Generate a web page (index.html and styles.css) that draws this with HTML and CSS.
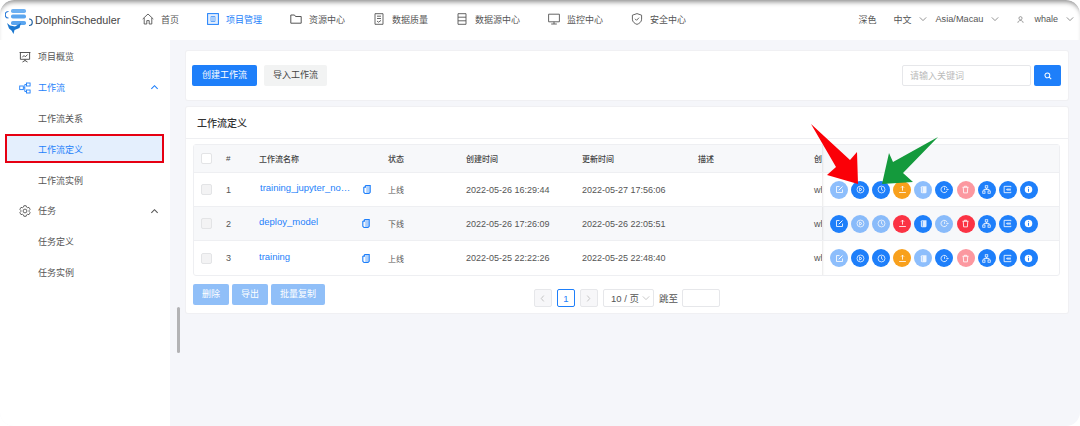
FILE: index.html
```html
<!DOCTYPE html>
<html lang="zh-CN">
<head>
<meta charset="utf-8">
<title>DolphinScheduler</title>
<link rel="stylesheet" href="styles.css">
</head>
<body>
<svg class="defs" aria-hidden="true">
  <symbol id="i-chev-d" viewBox="0 0 10 10"><path d="M1 3l4 4 4-4" fill="none" stroke="currentColor" stroke-width="1"/></symbol>
  <symbol id="i-chev-u" viewBox="0 0 10 10"><path d="M1.5 6.5L5 3l3.5 3.5" fill="none" stroke="currentColor" stroke-width="1.2"/></symbol>
  <symbol id="i-copy" viewBox="0 0 10 12"><path d="M3 1h6v8.5L7.5 11H2.5L1 9.5V3M3 1v2H1" fill="none" stroke="currentColor" stroke-width="1.4"/><path d="M3 1.5h5.5v8L7 10.5H4V2z" fill="currentColor" opacity=".35"/></symbol>
  <symbol id="a-edit" viewBox="0 0 12 12"><path d="M6 2H2v8h8V6" fill="none" stroke="#fff" stroke-width="1.1"/><path d="M5 7l5-5" stroke="#fff" stroke-width="1.3"/></symbol>
  <symbol id="a-play" viewBox="0 0 12 12"><circle cx="6" cy="6" r="4.6" fill="none" stroke="#fff"/><path d="M4.8 3.8L8 6 4.8 8.2z" fill="none" stroke="#fff"/></symbol>
  <symbol id="a-clock" viewBox="0 0 12 12"><circle cx="6" cy="6" r="4.6" fill="none" stroke="#fff"/><path d="M6 3v3.2l2 1.2" fill="none" stroke="#fff"/></symbol>
  <symbol id="a-upload" viewBox="0 0 12 12"><path d="M6 1.5v6M4 3.5l2-2 2 2M1.5 10h9" fill="none" stroke="#fff" stroke-width="1.1"/></symbol>
  <symbol id="a-file" viewBox="0 0 12 12"><path d="M3.5 1.5H10v8.5L8.7 11H4L2.5 10V3z" fill="#fff" opacity=".85"/><path d="M4.5 2.5L4.5 10" stroke="currentColor" stroke-width=".8"/></symbol>
  <symbol id="a-version" viewBox="0 0 12 12"><path d="M9.5 7.5A4.2 4.2 0 1 1 9.5 4.5" fill="none" stroke="#fff" stroke-width="1.1"/><path d="M6 3.5v3M8.5 6h3" stroke="#fff"/></symbol>
  <symbol id="a-trash" viewBox="0 0 12 12"><path d="M2 3h8M4.5 3V1.7h3V3M3 3l.5 7.5h5L9 3" fill="none" stroke="#fff" stroke-width="1.1"/></symbol>
  <symbol id="a-tree" viewBox="0 0 12 12"><g fill="none" stroke="#fff"><rect x="4.3" y="1" width="3.4" height="3"/><rect x="1" y="8" width="3" height="3"/><rect x="8" y="8" width="3" height="3"/><path d="M6 4v2M2.5 8V6h7v2"/></g></symbol>
  <symbol id="a-export" viewBox="0 0 12 12"><path d="M10.5 3V1.8h-9v8.4h9V9M10.5 5.5H5v1.2h5.5" fill="none" stroke="#fff" stroke-width="1.1"/></symbol>
  <symbol id="a-info" viewBox="0 0 12 12"><circle cx="6" cy="6" r="5" fill="#fff"/><path d="M6 3v1.2M6 5.2V9" stroke="currentColor" stroke-width="1.3"/></symbol>
</svg>

<div class="window">
  <header class="topbar">
    <a class="logo">
      <svg class="logo-mark" viewBox="0 0 28 28" width="28" height="28">
        <rect x="6" y="1" width="15" height="4" rx="1.8" fill="#6cb0f2"/>
        <rect x="6" y="6.5" width="15" height="4" rx="1.8" fill="#5aa5ef"/>
        <rect x="6" y="13" width="15" height="4" rx="1.8" fill="#5aa5ef"/>
        <path d="M3.5 3.5A3 3 0 0 0 3.5 10" fill="none" stroke="#2a7ad8" stroke-width="1.2"/>
        <path d="M24 11A3 3 0 0 1 24 17.5" fill="none" stroke="#1f5f9f" stroke-width="1.2"/>
        <path d="M2 15l3 2.5 5 1 6-3.5-1.500 5-5 2-1 4-2-3.500-2.500-2z" fill="#1c78d0"/>
      </svg>
      <span class="logo-text">DolphinScheduler</span>
    </a>
    <nav class="nav">
      <a class="nav-item"><svg class="nav-icon" viewBox="0 0 12 12"><path d="M.7 6L6 1l5.3 5M2.2 5v6h2.6V7.6h2.4V11h2.6V5" fill="none" stroke="currentColor" stroke-width=".9"/></svg>首页</a>
      <a class="nav-item is-active"><svg class="nav-icon" viewBox="0 0 12 12"><rect x=".6" y=".6" width="10.8" height="10.8" fill="#e3eefd" stroke="currentColor"/><path d="M4 3.5h4v5H4zM6 3.5v5" fill="none" stroke="currentColor" stroke-width=".6"/></svg>项目管理</a>
      <a class="nav-item"><svg class="nav-icon" viewBox="0 0 12 12"><path d="M.8 2h3.7l1 1.5h5.700v6.700H.8z" fill="none" stroke="currentColor"/></svg>资源中心</a>
      <a class="nav-item"><svg class="nav-icon" viewBox="0 0 12 12"><path d="M2 .7h8v10.600H2zM4 3.200h4M4 5.500h4M4 8l1.500 1.200L8 7.400" fill="none" stroke="currentColor" stroke-width=".9"/></svg>数据质量</a>
      <a class="nav-item"><svg class="nav-icon" viewBox="0 0 12 12"><path d="M2 .7h8v10.600H2zM2 4.200h8M2 7.800h8" fill="none" stroke="currentColor" stroke-width=".9"/></svg>数据源中心</a>
      <a class="nav-item"><svg class="nav-icon" viewBox="0 0 12 12"><path d="M.6 1.200h10.800v7.600H.6zM6 8.800v2.200M3.200 11h5.600" fill="none" stroke="currentColor" stroke-width=".9"/></svg>监控中心</a>
      <a class="nav-item"><svg class="nav-icon" viewBox="0 0 12 12"><path d="M6 .6l4.600 1.600v4C10.600 9 8.300 10.500 6 11.400 3.700 10.500 1.400 9 1.400 6.200v-4zM4 5.800l1.500 1.500L8 4.700" fill="none" stroke="currentColor" stroke-width=".9"/></svg>安全中心</a>
    </nav>
    <div class="top-tools">
      <span class="tool tool-theme">深色</span>
      <span class="tool">中文<svg class="chev"><use href="#i-chev-d"/></svg></span>
      <span class="tool tool-zone">Asia/Macau<svg class="chev"><use href="#i-chev-d"/></svg></span>
      <span class="tool"><svg class="user" viewBox="0 0 8 8"><circle cx="4" cy="2.500" r="1.800" fill="none" stroke="currentColor" stroke-width=".7"/><path d="M1 7.800c0-3.500 6-3.500 6 0" fill="none" stroke="currentColor" stroke-width=".7"/></svg>whale<svg class="chev"><use href="#i-chev-d"/></svg></span>
    </div>
  </header>

  <div class="body">
    <aside class="side">
      <a class="side-item"><svg class="side-icon" viewBox="0 0 12 12"><path d="M.6 1.500h10.800M1.400 1.500v6.800h9.200V1.500M6 8.300v1.200M3.500 11L6 9.500 8.500 11M3.300 6.300L5 4.500l1.300 1.300 2.300-2.300" fill="none" stroke="#444" stroke-width=".9"/></svg>项目概览</a>
      <a class="side-item is-open"><svg class="side-icon" viewBox="0 0 12 12"><g fill="none" stroke="currentColor" stroke-width=".9"><rect x=".7" y="4" width="3.600" height="3.600"/><rect x="7.500" y="1" width="3.600" height="3"/><rect x="7.500" y="8" width="3.600" height="3"/><path d="M4.300 5.800h1.500M5.800 2.500v7M5.800 2.500h1.700M5.800 9.500h1.700"/></g></svg>工作流<svg class="side-chev"><use href="#i-chev-u"/></svg></a>
      <a class="side-item side-sub">工作流关系</a>
      <a class="side-item side-sub is-current"><span class="current-bg"></span><span class="current-label">工作流定义</span></a>
      <a class="side-item side-sub">工作流实例</a>
      <a class="side-item"><svg class="side-icon" viewBox="0 0 12 12"><path d="M4.880 .72L7.120 .72 7.570 2.110 8.590 2.690 10.010 2.390 11.140 4.330 10.160 5.420 10.160 6.580 11.140 7.670 10.010 9.610 8.590 9.310 7.570 9.890 7.120 11.280 4.880 11.280 4.430 9.890 3.410 9.310 1.990 9.610 .86 7.670 1.840 6.580 1.840 5.420 .86 4.330 1.990 2.390 3.410 2.690 4.430 2.110z" fill="none" stroke="#444" stroke-width=".8"/><circle cx="6" cy="6" r="1.900" fill="none" stroke="#444" stroke-width=".8"/></svg>任务<svg class="side-chev"><use href="#i-chev-u"/></svg></a>
      <a class="side-item side-sub">任务定义</a>
      <a class="side-item side-sub">任务实例</a>
    </aside>

    <main class="main">
      <section class="card toolbar">
        <button class="btn btn-primary">创建工作流</button>
        <button class="btn btn-default">导入工作流</button>
        <div class="search">
          <input class="search-input" placeholder="请输入关键词">
          <button class="btn btn-primary btn-search"><svg viewBox="0 0 10 10" width="8" height="8"><circle cx="4.200" cy="4.200" r="3" fill="none" stroke="#fff" stroke-width="1.300"/><path d="M6.500 6.500L9 9" stroke="#fff" stroke-width="1.300"/></svg></button>
        </div>
      </section>

      <section class="card list">
        <h2 class="list-title">工作流定义</h2>
        <div class="list-body">
          <table class="table">
            <colgroup>
              <col class="c-check"><col class="c-num"><col class="c-name"><col class="c-state"><col class="c-time"><col class="c-time"><col class="c-time"><col class="c-user"><col>
            </colgroup>
            <thead>
              <tr>
                <th><span class="check check-head"></span></th><th>#</th><th>工作流名称</th><th>状态</th><th>创建时间</th><th>更新时间</th><th>描述</th><th>创建用户</th><th class="fixed"></th>
              </tr>
            </thead>
            <tbody>
              <tr>
                <td><span class="check"></span></td><td>1</td>
                <td><div class="name"><a class="link link-long">training_jupyter_notebook</a><svg class="copy"><use href="#i-copy"/></svg></div></td>
                <td class="state">上线</td><td>2022-05-26 16:29:44</td><td>2022-05-27 17:56:06</td><td></td><td>whale</td>
                <td class="fixed"><div class="acts">
                  <span class="act off"><svg><use href="#a-edit"/></svg></span>
                  <span class="act"><svg><use href="#a-play"/></svg></span>
                  <span class="act"><svg><use href="#a-clock"/></svg></span>
                  <span class="act warn"><svg><use href="#a-upload"/></svg></span>
                  <span class="act off"><svg><use href="#a-file"/></svg></span>
                  <span class="act"><svg><use href="#a-version"/></svg></span>
                  <span class="act danger off"><svg><use href="#a-trash"/></svg></span>
                  <span class="act"><svg><use href="#a-tree"/></svg></span>
                  <span class="act"><svg><use href="#a-export"/></svg></span>
                  <span class="act"><svg><use href="#a-info"/></svg></span>
                </div></td>
              </tr>
              <tr class="stripe">
                <td><span class="check"></span></td><td>2</td>
                <td><div class="name"><a class="link">deploy_model</a><svg class="copy"><use href="#i-copy"/></svg></div></td>
                <td class="state">下线</td><td>2022-05-26 17:26:09</td><td>2022-05-26 22:05:51</td><td></td><td>whale</td>
                <td class="fixed"><div class="acts">
                  <span class="act"><svg><use href="#a-edit"/></svg></span>
                  <span class="act off"><svg><use href="#a-play"/></svg></span>
                  <span class="act off"><svg><use href="#a-clock"/></svg></span>
                  <span class="act danger"><svg><use href="#a-upload"/></svg></span>
                  <span class="act"><svg><use href="#a-file"/></svg></span>
                  <span class="act off"><svg><use href="#a-version"/></svg></span>
                  <span class="act danger"><svg><use href="#a-trash"/></svg></span>
                  <span class="act"><svg><use href="#a-tree"/></svg></span>
                  <span class="act"><svg><use href="#a-export"/></svg></span>
                  <span class="act"><svg><use href="#a-info"/></svg></span>
                </div></td>
              </tr>
              <tr>
                <td><span class="check"></span></td><td>3</td>
                <td><div class="name"><a class="link">training</a><svg class="copy"><use href="#i-copy"/></svg></div></td>
                <td class="state">上线</td><td>2022-05-25 22:22:26</td><td>2022-05-25 22:48:40</td><td></td><td>whale</td>
                <td class="fixed"><div class="acts">
                  <span class="act off"><svg><use href="#a-edit"/></svg></span>
                  <span class="act"><svg><use href="#a-play"/></svg></span>
                  <span class="act"><svg><use href="#a-clock"/></svg></span>
                  <span class="act warn"><svg><use href="#a-upload"/></svg></span>
                  <span class="act off"><svg><use href="#a-file"/></svg></span>
                  <span class="act"><svg><use href="#a-version"/></svg></span>
                  <span class="act danger off"><svg><use href="#a-trash"/></svg></span>
                  <span class="act"><svg><use href="#a-tree"/></svg></span>
                  <span class="act"><svg><use href="#a-export"/></svg></span>
                  <span class="act"><svg><use href="#a-info"/></svg></span>
                </div></td>
              </tr>
            </tbody>
          </table>
          <div class="foot">
            <div class="batch">
              <button class="btn btn-batch">删除</button>
              <button class="btn btn-batch">导出</button>
              <button class="btn btn-batch">批量复制</button>
            </div>
            <div class="pager">
              <span class="pg pg-off"><svg class="pg-chev" viewBox="0 0 6 10"><path d="M4.500 1.500L1.500 5l3 3.500" fill="none" stroke="currentColor"/></svg></span>
              <span class="pg pg-on">1</span>
              <span class="pg pg-off"><svg class="pg-chev" viewBox="0 0 6 10"><path d="M1.500 1.500l3 3.500-3 3.500" fill="none" stroke="currentColor"/></svg></span>
              <span class="pg-size">10 / 页<svg class="chev chev-size"><use href="#i-chev-d"/></svg></span>
              <span class="pg-jump">跳至</span>
              <span class="pg-input"></span>
            </div>
          </div>
        </div>
      </section>
    </main>
  </div>

  <span class="scroll-thumb"></span>
  <span class="mark-frame"></span>
  <svg class="arrows" viewBox="0 0 1080 426" width="1080" height="426">
    <polygon points="811,124 850,160 857,152 858,184 827,175 836,167" fill="#fb0007"/>
    <polygon points="938,137 893,162 889,153 882,184 913,182 903,173" fill="#149a3c"/>
  </svg>
</div>
</body>
</html>
```

FILE: styles.css
```css
* { box-sizing: border-box; }
html, body { margin: 0; padding: 0; background: #fff; }
body {
  width: 1080px;
  height: 426px;
  overflow: hidden;
  font-family: "Liberation Sans", "Noto Sans CJK SC", sans-serif;
  color: #555;
}
.defs { display: none; }
a { color: inherit; text-decoration: none; }
button { font: inherit; margin: 0; }

.window {
  position: relative;
  width: 1080px;
  height: 426px;
  display: flex;
  flex-direction: column;
  border-radius: 14px;
  overflow: hidden;
  background: #f5f6fa;
}

/* top bar */
.topbar {
  flex: none;
  height: 40px;
  padding-bottom: 2px;
  display: flex;
  align-items: center;
  background: #fff;
  border-radius: 14px 14px 0 0;
  box-shadow: inset 0 5px 5px -3px rgba(0, 0, 0, .45);
  font-size: 9px;
}
.logo { flex: none; width: 142px; display: flex; align-items: center; padding-left: 5px; gap: 2px; }
.logo-mark { flex: none; margin-top: 6px; }
.logo-text { font-size: 10.800px; color: #444; margin-top: 2px; }
.nav { display: flex; gap: 28px; }
.nav-item { display: flex; align-items: center; gap: 7px; color: #555; white-space: nowrap; }
.nav-item.is-active { color: #1e7ffa; }
.nav-icon { width: 12px; height: 12px; flex: none; }
.top-tools { margin-left: auto; display: flex; align-items: center; gap: 8px; padding-right: 6px; }
.tool { display: flex; align-items: center; white-space: nowrap; color: #555; }
.tool-theme { margin-right: 9px; }
.tool-zone { font-size: 9.200px; }
.chev { width: 8px; height: 8px; margin-left: 8px; color: #777; }
.user { width: 7px; height: 7px; margin: 0 10px 0 10px; color: #666; }

/* body */
.body { flex: 1; min-height: 0; display: flex; }
.side {
  flex: none;
  width: 170px;
  padding-top: 1.600px;
  background: #fff;
  font-size: 9px;
  color: #555;
}
.side-item {
  position: relative;
  display: flex;
  align-items: center;
  height: 30.800px;
  padding-left: 19px;
  white-space: nowrap;
}
.side-sub { padding-left: 38px; }
.side-icon { width: 12px; height: 12px; margin-right: 7px; flex: none; }
.side-chev { position: absolute; left: 150px; top: 11px; width: 9px; height: 9px; color: #555; }
.is-open { color: #1e7ffa; }
.is-open .side-chev { color: #1e7ffa; }
.is-current { color: #1e7ffa; }
.current-bg { position: absolute; left: 5px; right: 6px; top: 1px; height: 28px; background: #e4effd; }
.current-label { position: relative; }

.main {
  flex: 1;
  min-width: 0;
  padding: 11px 12px 0 16px;
  display: flex;
  flex-direction: column;
  gap: 7px;
}
.card { background: #fff; box-shadow: 0 0 0 1px #f0f0f3; border-radius: 2px; }
.toolbar {
  height: 49px;
  display: flex;
  align-items: center;
  gap: 7px;
  padding: 0 7px 0 6px;
}
.btn {
  height: 21px;
  padding: 0 9px;
  border: 0;
  border-radius: 2px;
  font-size: 9px;
  line-height: 21px;
  font-family: "Liberation Sans", "Noto Sans CJK SC", sans-serif;
  white-space: nowrap;
}
.btn-primary { background: #1e7ffa; color: #fff; width: 65px; padding: 0; }
.btn-default { background: #f2f3f3; color: #444; width: 63px; padding: 0; }
.search { margin-left: auto; display: flex; gap: 3px; }
.search-input {
  width: 129px;
  height: 21px;
  border: 1px solid #e6e7ea;
  border-radius: 2px;
  padding: 0 7px;
  font-size: 9px;
  font-family: inherit;
  outline: 0;
}
.search-input::placeholder { color: #bbb; }
.btn-search { width: 27px; display: flex; align-items: center; justify-content: center; }

.list { height: 206px; }
.list-title {
  height: 32px;
  margin: 0;
  padding: 0 11px;
  border-bottom: 1px solid #eeeff2;
  font-size: 10px;
  font-weight: 500;
  line-height: 33px;
  color: #333;
}
.list-body { padding: 5px 7px 0; }
.table {
  width: 867px;
  table-layout: fixed;
  border-collapse: separate;
  border-spacing: 0;
  font-size: 8px;
  color: #555;
  border: 1px solid #eeeff2;
  border-radius: 3px;
}
.c-check { width: 25px; }
.c-num { width: 33px; }
.c-name { width: 129px; }
.c-state { width: 78px; }
.c-time { width: 116px; }
.c-user { width: 15px; }
.table th, .table td {
  padding: 0 0 0 7px;
  overflow: hidden;
  white-space: nowrap;
  text-align: left;
  font-weight: 400;
  border-bottom: 1px solid #eeeff2;
}
.table thead th { height: 28px; background: #f7f8fa; color: #444; font-weight: 500; }
.table tbody td { height: 34px; font-size: 9px; }
.table tbody td.state { font-size: 8px; }
.table tbody tr:last-child td { border-bottom: 0; }
.stripe td { background: #f7f8fa; }
.table .fixed { position: relative; padding: 0 0 0 8px; box-shadow: inset 3px 0 2px -2px rgba(0, 0, 0, .09); }
.check {
  display: block;
  width: 11px;
  height: 11px;
  border: 1px solid #e3e4e6;
  border-radius: 2px;
  background: #f3f3f4;
}
.check-head { background: #fff; }
.name { display: flex; align-items: center; }
.link { width: 103px; color: #1e7ffa; font-size: 9.500px; margin-top: -4px; overflow: hidden; text-overflow: ellipsis; }
.link-long { width: 91px; margin-left: 1px; margin-right: 12px; }
.copy { width: 8px; height: 11px; color: #1e7ffa; flex: none; }
.acts { display: flex; gap: 3.100px; }
.act {
  width: 18px;
  height: 18px;
  border-radius: 50%;
  background: #1e7ffa;
  color: #1e7ffa;
  display: flex;
  align-items: center;
  justify-content: center;
  flex: none;
}
.act svg { width: 9px; height: 9px; }
.act.warn { background: #f8a01c; }
.act.danger { background: #fb3344; color: #fb3344; }
.act.off { opacity: .5; }

.foot { position: relative; display: grid; grid-template-columns: 1fr auto 1fr; margin-top: 8px; }
.batch { display: flex; gap: 3px; }
.btn-batch { background: #90bff8; color: #fff; padding: 0 9px; min-width: 36px; }
.pager { display: flex; align-items: center; margin-top: 5px; height: 18px; font-size: 9.500px; color: #555; }
.pg {
  width: 18px;
  height: 18px;
  display: flex;
  align-items: center;
  justify-content: center;
  border: 1px solid #e6e7ea;
  border-radius: 2px;
  margin-right: 5px;
  background: #fff;
}
.pg-off { background: #f7f7f9; color: #bbb; }
.pg-on { border-color: #1e7ffa; color: #1e7ffa; }
.pg-chev { width: 5px; height: 9px; }
.pg-size {
  width: 51px;
  height: 18px;
  display: flex;
  align-items: center;
  padding-left: 7px;
  border: 1px solid #e6e7ea;
  border-radius: 2px;
  white-space: nowrap;
}
.chev-size { margin-left: 3px; color: #bbb; }
.pg-jump { margin: 0 4px 0 5px; white-space: nowrap; }
.pg-input { width: 38px; height: 18px; border: 1px solid #e6e7ea; border-radius: 2px; }

/* overlays */
.scroll-thumb {
  position: absolute;
  left: 177px;
  top: 307px;
  width: 3px;
  height: 46px;
  border-radius: 2px;
  background: #b3b3b5;
}
.mark-frame {
  position: absolute;
  left: 5px;
  top: 134px;
  width: 159px;
  height: 29px;
  border: 2px solid #e60012;
}
.arrows { position: absolute; left: 0; top: 0; pointer-events: none; }
```
